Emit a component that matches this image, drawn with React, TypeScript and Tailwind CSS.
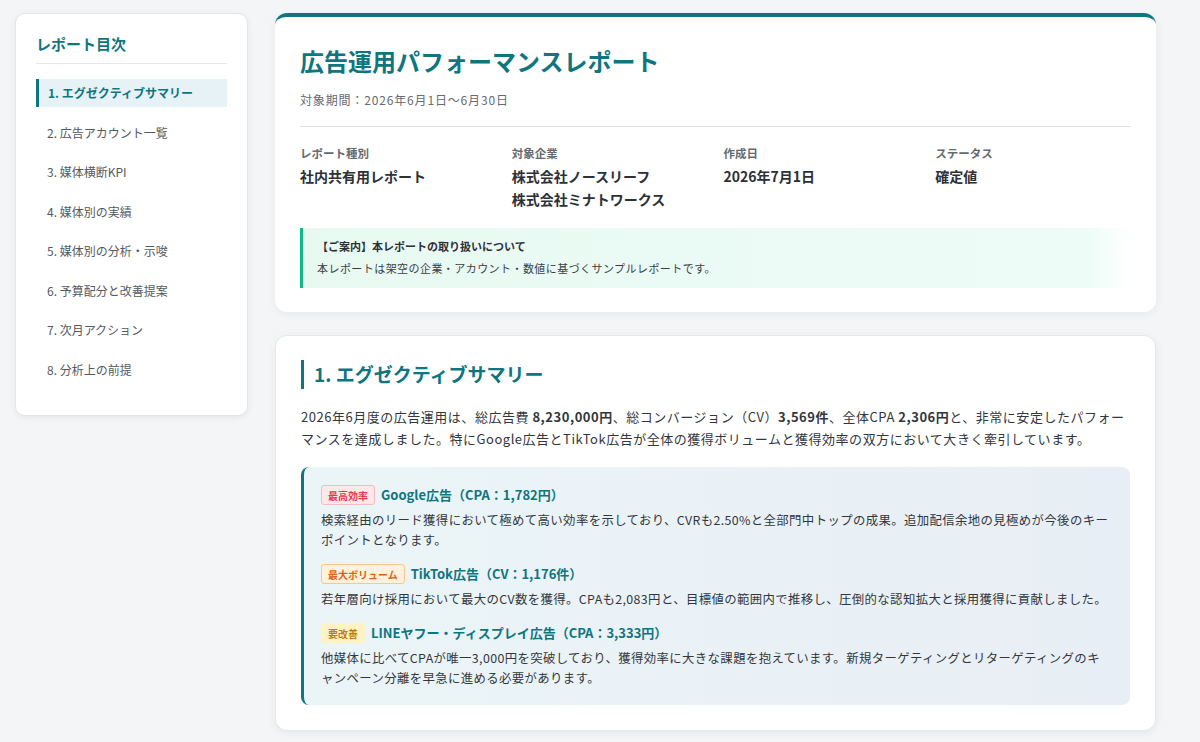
import React from "react";

const font = { fontFamily: '"Noto Sans CJK JP", "Noto Sans", sans-serif' };

const navItems = [
  "1. エグゼクティブサマリー",
  "2. 広告アカウント一覧",
  "3. 媒体横断KPI",
  "4. 媒体別の実績",
  "5. 媒体別の分析・示唆",
  "6. 予算配分と改善提案",
  "7. 次月アクション",
  "8. 分析上の前提",
];

function Sidebar() {
  return (
    <aside className="w-[233px] shrink-0 self-start mt-[13px] rounded-[10px] border border-[#e3e5e8] bg-white px-[20px] pt-[20px] pb-[31px] shadow-[0_2px_6px_rgba(0,0,0,0.06)]">
      <div className="text-[15px] leading-[20px] font-bold text-[#0f7680] pb-[9px] border-b border-[#e6e8ea] mb-[15px]">
        レポート目次
      </div>
      <nav className="flex flex-col gap-[11.5px]">
        {navItems.map((t, i) =>
          i === 0 ? (
            <div
              key={t}
              className="h-[28px] flex items-center pl-[9px] border-l-[3px] border-[#0f7680] bg-[#e6f2f5] text-[12px] font-bold text-[#0f7680]"
            >
              {t}
            </div>
          ) : (
            <div key={t} className="h-[28px] flex items-center pl-[11px] text-[12px] text-[#555a60]">
              {t}
            </div>
          )
        )}
      </nav>
    </aside>
  );
}

function Meta({ label, values }: { label: string; values: string[] }) {
  return (
    <div className="flex flex-col">
      <div className="text-[11.5px] leading-[18px] font-bold text-[#666b70]">{label}</div>
      <div className="mt-[3px] text-[14px] leading-[23px] font-bold text-[#2d3136]">
        {values.map((v) => (
          <div key={v}>{v}</div>
        ))}
      </div>
    </div>
  );
}

function HeaderCard() {
  return (
    <section className="rounded-[12px] border-t-[4px] border-[#0f7680] bg-white px-[25px] pt-[27px] pb-[24px] shadow-[0_2px_8px_rgba(0,0,0,0.06)]">
      <h1 className="text-[24px] leading-[34px] font-bold text-[#0f7680]">広告運用パフォーマンスレポート</h1>
      <div className="mt-[13px] text-[12px] leading-[18px] tracking-[0.07em] text-[#666b70]">
        対象期間：2026年6月1日〜6月30日
      </div>
      <div className="mt-[17px] border-t border-[#dfe2e5] pt-[17px] grid grid-cols-4 gap-x-4">
        <Meta label="レポート種別" values={["社内共有用レポート"]} />
        <Meta label="対象企業" values={["株式会社ノースリーフ", "株式会社ミナトワークス"]} />
        <Meta label="作成日" values={["2026年7月1日"]} />
        <Meta label="ステータス" values={["確定値"]} />
      </div>
      <div className="mt-[17px] border-l-[3px] border-[#12b886] bg-linear-to-r from-[#e8f9f2] via-[#eefcf7] via-95% to-white pl-[14px] pr-[14px] pt-[9px] pb-[11px]">
        <div className="text-[11px] leading-[18px] font-bold text-[#2d3136]">【ご案内】本レポートの取り扱いについて</div>
        <div className="mt-[4px] text-[11px] leading-[18px] tracking-[0.04em] text-[#3b3f44]">
          本レポートは架空の企業・アカウント・数値に基づくサンプルレポートです。
        </div>
      </div>
    </section>
  );
}

function Badge({ text, cls }: { text: string; cls: string }) {
  return (
    <span className={"inline-flex h-[20px] items-center rounded-[3px] border px-[6px] text-[10px] font-bold " + cls}>
      {text}
    </span>
  );
}

function Item({
  badge,
  badgeCls,
  title,
  body,
}: {
  badge: string;
  badgeCls: string;
  title: string;
  body: string;
}) {
  return (
    <div>
      <div className="flex items-center gap-[6px]">
        <Badge text={badge} cls={badgeCls} />
        <span className="text-[13px] font-bold text-[#0f7680]">{title}</span>
      </div>
      <p className="mt-[5px] text-[12.4px] leading-[20px] tracking-[0.03em] text-[#33373c]">{body}</p>
    </div>
  );
}

function SummaryCard() {
  return (
    <section className="rounded-[12px] border border-[#e6e8ea] bg-white px-[25px] pt-[24px] pb-[25px] shadow-[0_2px_8px_rgba(0,0,0,0.06)]">
      <h2 className="border-l-[3px] border-[#0f7680] pl-[10px] h-[29px] flex items-center text-[19px] font-bold text-[#0f7680]">
        1. エグゼクティブサマリー
      </h2>
      <p className="mt-[17px] text-[13px] leading-[22px] tracking-[0.04em] text-[#33373c]">
        2026年6月度の広告運用は、総広告費 <b>8,230,000円</b>、総コンバージョン（CV）<b>3,569件</b>、全体CPA{" "}
        <b>2,306円</b>
        と、非常に安定したパフォーマンスを達成しました。特にGoogle広告とTikTok広告が全体の獲得ボリュームと獲得効率の双方において大きく牽引しています。
      </p>
      <div className="mt-[17px] rounded-[8px] border-l-[3px] border-[#0f7680] bg-linear-to-r from-[#ebf5f7] to-[#e8eef5] pl-[17px] pr-[20px] pt-[18px] pb-[17px] flex flex-col gap-[14px]">
        <Item
          badge="最高効率"
          badgeCls="bg-[#fde8ea] border-[#f7b9c0] text-[#e5394a]"
          title="Google広告（CPA：1,782円）"
          body="検索経由のリード獲得において極めて高い効率を示しており、CVRも2.50%と全部門中トップの成果。追加配信余地の見極めが今後のキーポイントとなります。"
        />
        <Item
          badge="最大ボリューム"
          badgeCls="bg-[#fff1dc] border-[#f8c98a] text-[#e0620f]"
          title="TikTok広告（CV：1,176件）"
          body="若年層向け採用において最大のCV数を獲得。CPAも2,083円と、目標値の範囲内で推移し、圧倒的な認知拡大と採用獲得に貢献しました。"
        />
        <Item
          badge="要改善"
          badgeCls="bg-[#fdf3c4] border-[#fdf3c4] text-[#c27c0e]"
          title="LINEヤフー・ディスプレイ広告（CPA：3,333円）"
          body="他媒体に比べてCPAが唯一3,000円を突破しており、獲得効率に大きな課題を抱えています。新規ターゲティングとリターゲティングのキャンペーン分離を早急に進める必要があります。"
        />
      </div>
    </section>
  );
}

export default function App() {
  return (
    <div style={font} className="min-h-[742px] bg-[#f4f5f7] flex items-start pl-[15px] text-[#33373c]">
      <Sidebar />
      <main className="ml-[27px] w-[881px] pt-[13px] pb-[12px] flex flex-col gap-[23px]">
        <HeaderCard />
        <SummaryCard />
      </main>
    </div>
  );
}
